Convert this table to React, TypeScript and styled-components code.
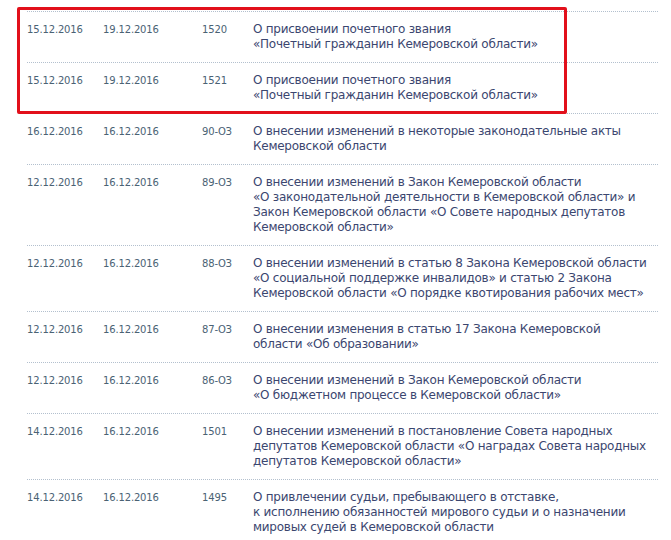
import React from "react";
import styled, { createGlobalStyle } from "styled-components";

const Global = createGlobalStyle`
  html, body { margin: 0; padding: 0; background: #ffffff; }
  body { font-family: "DejaVu Sans", Verdana, sans-serif; }
`;

const Page = styled.div`
  padding: 11px 13px 0 27px;
  width: 631px;
`;

const List = styled.div`
  position: relative;
  border-top: 1px dotted #b3c0ce;
`;

const Row = styled.div`
  display: grid;
  grid-template-columns: 76px 99px 51px 1fr;
  padding: 10px 0 10px;
  border-bottom: 1px dotted #b3c0ce;
  align-items: start;
`;

const Cell = styled.div`
  font-size: 10px;
  letter-spacing: -0.15px;
  line-height: 15px;
  color: #4a6274;
  white-space: nowrap;
`;

const Title = styled.div`
  font-size: 12px;
  letter-spacing: -0.25px;
  line-height: 15px;
  color: #3b466f;
  white-space: nowrap;
`;

const Highlight = styled.div`
  position: absolute;
  left: -10px;
  top: -5px;
  width: 544px;
  height: 101px;
  border: 3px solid #e2101b;
  border-radius: 2px;
  pointer-events: none;
`;

type Item = { d1: string; d2: string; num: string; lines: string[] };

const items: Item[] = [
  { d1: "15.12.2016", d2: "19.12.2016", num: "1520", lines: ["О присвоении почетного звания", "«Почетный гражданин Кемеровской области»"] },
  { d1: "15.12.2016", d2: "19.12.2016", num: "1521", lines: ["О присвоении почетного звания", "«Почетный гражданин Кемеровской области»"] },
  { d1: "16.12.2016", d2: "16.12.2016", num: "90-ОЗ", lines: ["О внесении изменений в некоторые законодательные акты", "Кемеровской области"] },
  { d1: "12.12.2016", d2: "16.12.2016", num: "89-ОЗ", lines: ["О внесении изменений в Закон Кемеровской области", "«О законодательной деятельности в Кемеровской области» и", "Закон Кемеровской области «О Совете народных депутатов", "Кемеровской области»"] },
  { d1: "12.12.2016", d2: "16.12.2016", num: "88-ОЗ", lines: ["О внесении изменений в статью 8 Закона Кемеровской области", "«О социальной поддержке инвалидов» и статью 2 Закона", "Кемеровской области «О порядке квотирования рабочих мест»"] },
  { d1: "12.12.2016", d2: "16.12.2016", num: "87-ОЗ", lines: ["О внесении изменения в статью 17 Закона Кемеровской", "области «Об образовании»"] },
  { d1: "12.12.2016", d2: "16.12.2016", num: "86-ОЗ", lines: ["О внесении изменений в Закон Кемеровской области", "«О бюджетном процессе в Кемеровской области»"] },
  { d1: "14.12.2016", d2: "16.12.2016", num: "1501", lines: ["О внесении изменений в постановление Совета народных", "депутатов Кемеровской области «О наградах Совета народных", "депутатов Кемеровской области»"] },
  { d1: "14.12.2016", d2: "16.12.2016", num: "1495", lines: ["О привлечении судьи, пребывающего в отставке,", "к исполнению обязанностей мирового судьи и о назначении", "мировых судей в Кемеровской области"] },
];

export default function App() {
  return (
    <>
      <Global />
      <Page>
        <List>
          {items.map((it, i) => (
            <Row key={i}>
              <Cell>{it.d1}</Cell>
              <Cell>{it.d2}</Cell>
              <Cell>{it.num}</Cell>
              <Title>
                {it.lines.map((l, j) => (
                  <div key={j}>{l}</div>
                ))}
              </Title>
            </Row>
          ))}
          <Highlight />
        </List>
      </Page>
    </>
  );
}
